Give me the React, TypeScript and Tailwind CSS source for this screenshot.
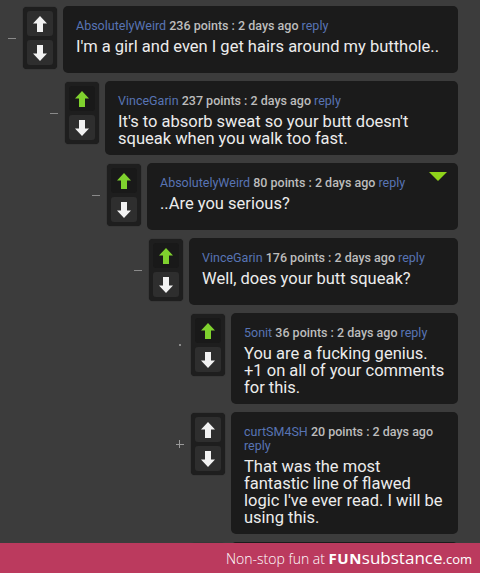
import React from "react";

type Comment = {
  user: string;
  points: number;
  body: string;
  depth: number;
  up?: boolean;
  mark: "dash" | "dot" | "plus";
  flag?: boolean;
};

const comments: Comment[] = [
  { user: "AbsolutelyWeird", points: 236, body: "I'm a girl and even I get hairs around my butthole..", depth: 0, mark: "dash" },
  { user: "VinceGarin", points: 237, body: "It's to absorb sweat so your butt doesn't squeak when you walk too fast.", depth: 1, up: true, mark: "dash" },
  { user: "AbsolutelyWeird", points: 80, body: "..Are you serious?", depth: 2, up: true, mark: "dash", flag: true },
  { user: "VinceGarin", points: 176, body: "Well, does your butt squeak?", depth: 3, up: true, mark: "dash" },
  { user: "5onit", points: 36, body: "You are a fucking genius. +1 on all of your comments for this.", depth: 4, up: true, mark: "dot" },
  { user: "curtSM4SH", points: 20, body: "That was the most fantastic line of flawed logic I've ever read. I will be using this.", depth: 4, mark: "plus" },
];

const indent = ["pl-0", "pl-[42px]", "pl-[84px]", "pl-[126px]", "pl-[168px]"];

function Arrow({ down, green }: { down?: boolean; green?: boolean }) {
  return (
    <svg width="14" height="16" viewBox="0 0 14 16" className={down ? "rotate-180" : ""}>
      <path d="M7 0 L14 7.5 L10 7.5 L10 16 L4 16 L4 7.5 L0 7.5 Z" fill={green ? "#7fd12e" : "#f2f2f2"} />
    </svg>
  );
}

function Marker({ kind }: { kind: Comment["mark"] }) {
  if (kind === "dash") return <div className="w-[8px] h-px bg-[#8a8a8a]" />;
  if (kind === "dot") return <div className="w-[2px] h-[2px] bg-[#8a8a8a]" />;
  return (
    <div className="relative w-[8px] h-[8px]">
      <div className="absolute left-0 top-[3.5px] w-[8px] h-px bg-[#9a9a9a]" />
      <div className="absolute top-0 left-[3.5px] h-[8px] w-px bg-[#9a9a9a]" />
    </div>
  );
}

function VoteBox({ up }: { up?: boolean }) {
  return (
    <div className="w-[34px] mt-px shrink-0 bg-[#1e1e1e] rounded-[4px] p-[4px] flex flex-col gap-[4px] shadow-[0_0_1px_#111]">
      <div className={`h-[25px] rounded-[3px] flex items-center justify-center ${up ? "bg-[#191919]" : "bg-[#2e2e2e]"}`}>
        <Arrow green={up} />
      </div>
      <div className="h-[25px] rounded-[3px] bg-[#2e2e2e] flex items-center justify-center">
        <Arrow down />
      </div>
    </div>
  );
}

function Row({ c }: { c: Comment }) {
  return (
    <div className={`flex items-start ${indent[c.depth]}`}>
      <div className="w-[23px] h-[62px] mt-px flex items-center justify-center">
        <Marker kind={c.mark} />
      </div>
      <VoteBox up={c.up} />
      <div className="relative ml-[6px] flex-1 min-h-[67px] bg-[#1b1b1b] rounded-[5px] pl-[13px] pr-[13px] pt-[13px] pb-[8px]">
        {c.flag && (
          <svg width="18" height="9" viewBox="0 0 18 9" className="absolute right-[11px] top-[9px]">
            <path d="M0 0 L18 0 L9 9 Z" fill="#8fd41a" />
          </svg>
        )}
        <div className="text-[12.5px] leading-[14px] text-[#bdbdbd] font-medium">
          <span className="text-[#5874b4] font-normal">{c.user}</span> {c.points} points : 2 days ago{" "}
          <span className="text-[#5874b4] font-normal">reply</span>
        </div>
        <div className="mt-[5px] text-[16.5px] leading-[17px] text-[#ececec]">{c.body}</div>
      </div>
    </div>
  );
}

export default function App() {
  return (
    <div className="w-[480px] h-[573px] flex flex-col bg-[#3c3c3c] overflow-hidden" style={{ fontFamily: "Roboto, 'Noto Sans', sans-serif" }}>
      <div className="flex-1 overflow-hidden pt-[6px] pr-[22px] flex flex-col gap-[8px]">
        {comments.map((c, i) => (
          <Row key={i} c={c} />
        ))}
        {/* next comment, cut off by the footer */}
        <div className="flex items-start pl-[168px]">
          <div className="w-[23px]" />
          <VoteBox />
          <div className="ml-[6px] flex-1 h-[67px] bg-[#1b1b1b] rounded-[5px]" />
        </div>
      </div>
      <div className="h-[30px] shrink-0 bg-[#bb3a5e] flex justify-end pr-[8px] text-white">
        <p className="leading-[30px] whitespace-nowrap" style={{ fontFamily: "'Open Sans', sans-serif" }}>
          <span className="text-[14px] font-light">Non-stop fun at </span>
          <span className="text-[15px] font-bold tracking-[0.5px]">FUN</span>
          <span className="text-[17px]">substance</span>
          <span className="text-[13px]">.com</span>
        </p>
      </div>
    </div>
  );
}
